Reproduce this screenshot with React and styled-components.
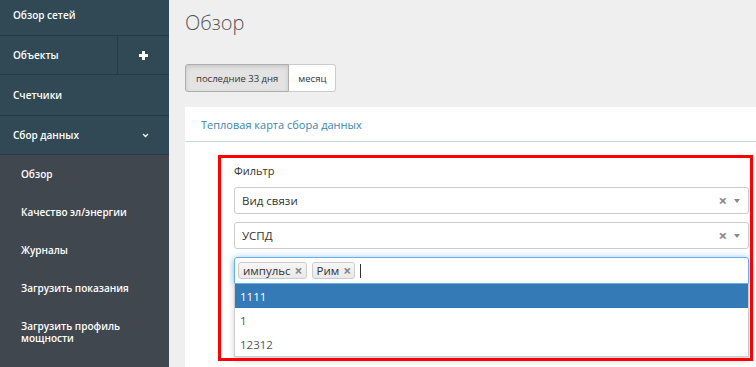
import React from "react";
import styled, { createGlobalStyle } from "styled-components";

const Global = createGlobalStyle`
  html, body { margin: 0; padding: 0; }
  body { font-family: "Open Sans", "Liberation Sans", sans-serif; background: #efefef; overflow: hidden; }
  * { box-sizing: border-box; }
`;

const Layout = styled.div`
  display: flex;
  width: 756px;
  height: 367px;
  overflow: hidden;
`;

const Sidebar = styled.nav`
  width: 169px;
  flex: none;
  display: flex;
  flex-direction: column;
  background: #41474e;
`;

const NavRow = styled.div`
  display: flex;
  align-items: stretch;
  height: ${(p) => p.$h || 40}px;
  background: #304954;
  border-bottom: 1px solid #243a44;
  color: #fff;
  font-size: 10px;
  font-weight: 600;
`;

const NavLabel = styled.div`
  flex: 1;
  display: flex;
  align-items: center;
  justify-content: space-between;
  padding: 0 20px 0 13px;
  padding-bottom: ${(p) => p.$pb || 0}px;
`;

const NavAction = styled.div`
  width: 52px;
  border-left: 1px solid #243a44;
  display: flex;
  align-items: center;
  justify-content: center;
`;

const SubMenu = styled.div`
  display: flex;
  flex-direction: column;
`;

const SubItem = styled.div`
  min-height: 38px;
  display: flex;
  align-items: center;
  padding: ${(p) => (p.$multi ? "12px 20px 0 21px" : "0 20px 0 21px")};
  color: #fff;
  font-size: 10px;
  font-weight: 600;
  line-height: 12.5px;
`;

const Main = styled.main`
  flex: 1;
  padding-left: 16px;
  display: flex;
  flex-direction: column;
  overflow: hidden;
`;

const Title = styled.h1`
  margin: 11px 0 0;
  font-size: 20px;
  font-weight: 300;
  line-height: 24px;
  color: #555;
`;

const BtnGroup = styled.div`
  display: flex;
  margin-top: 29px;
`;

const Btn = styled.button`
  height: 28px;
  padding: 0 ${(p) => (p.$first ? 10 : 9)}px;
  font-family: inherit;
  font-size: 9.5px;
  color: #333;
  border: 1px solid #ccc;
  background: ${(p) => (p.$active ? "#e3e3e3" : "#fff")};
  box-shadow: ${(p) => (p.$active ? "inset 0 2px 4px rgba(0,0,0,.12)" : "none")};
  border-radius: ${(p) => (p.$first ? "3px 0 0 3px" : "0 3px 3px 0")};
  border-left-width: ${(p) => (p.$first ? "1px" : "0")};
  border-color: ${(p) => (p.$active ? "#adadad" : "#ccc")};
`;

const Panel = styled.section`
  margin-top: 15px;
  width: 600px;
  flex: 1;
  background: #fff;
  display: flex;
  flex-direction: column;
`;

const PanelHead = styled.div`
  height: 35px;
  padding: 0 16px;
  display: flex;
  align-items: center;
  color: #3a87ad;
  font-size: 11px;
  border-bottom: 1px solid #c4d8df;
`;

const PanelBody = styled.div`
  position: relative;
  flex: 1;
  padding: 21px 0 0 49px;
`;

const Filter = styled.div`
  width: 515px;
  display: flex;
  flex-direction: column;
`;

const Label = styled.div`
  font-size: 11px;
  color: #333;
  line-height: 16px;
  margin-bottom: 8px;
`;

const Select = styled.div`
  height: 27px;
  border: 1px solid #ccc;
  border-radius: 3px;
  display: flex;
  align-items: center;
  padding: 0 8px 0 7px;
  font-size: 11.5px;
  color: #333;
  margin-bottom: 8px;
`;

const SelectText = styled.span`
  flex: 1;
`;

const Clear = styled.span`
  color: #888;
  font-size: 15px;
  font-weight: 700;
  margin-right: 7px;
  line-height: 1;
`;

const Caret = styled.span`
  width: 0;
  height: 0;
  border-left: 3px solid transparent;
  border-right: 3px solid transparent;
  border-top: 4px solid #888;
`;

const Multi = styled.div`
  display: flex;
  flex-direction: column;
  box-shadow: 0 4px 6px rgba(0, 0, 0, 0.18);
`;

const MultiInput = styled.div`
  height: 27px;
  border: 1px solid #66afe9;
  border-radius: 3px 3px 0 0;
  box-shadow: 0 0 6px rgba(102, 175, 233, 0.6);
  display: flex;
  align-items: center;
  gap: 5px;
  padding: 0 3px;
`;

const Tag = styled.span`
  display: inline-flex;
  align-items: center;
  gap: 4px;
  height: 17px;
  padding: 0 3px 0 4px;
  border: 1px solid #ccc;
  border-radius: 3px;
  background: linear-gradient(#f6f6f6, #e9e9e9);
  font-size: 11.5px;
  color: #333;
`;

const TagX = styled.span`
  color: #888;
  font-weight: 700;
  font-size: 14px;
  line-height: 1;
`;

const Cursor = styled.span`
  width: 1px;
  height: 14px;
  background: #333;
`;

const Dropdown = styled.div`
  border: 1px solid #ccc;
  border-top: none;
  background: #fff;
`;

const Option = styled.div`
  height: 24px;
  display: flex;
  align-items: center;
  padding-left: 5px;
  font-size: 11.5px;
  color: ${(p) => (p.$hl ? "#fff" : "#555")};
  background: ${(p) => (p.$hl ? "#337ab7" : "#fff")};
`;

const Highlight = styled.div`
  position: absolute;
  left: 33px;
  top: 13px;
  width: 535px;
  height: 206px;
  border: 3px solid #ff0000;
  pointer-events: none;
`;

const Plus = () => (
  <svg width="9" height="9" viewBox="0 0 9 9">
    <path d="M3 0h3v3h3v3H6v3H3V6H0V3h3z" fill="#fff" />
  </svg>
);

const Chevron = () => (
  <svg width="7" height="5" viewBox="0 0 7 5">
    <path d="M1 1l2.5 2.5L6 1" stroke="#fff" strokeWidth="1.3" fill="none" />
  </svg>
);

export default function App() {
  return (
    <>
      <Global />
      <Layout>
        <Sidebar>
          <NavRow $h={36}>
            <NavLabel $pb={5}>Обзор сетей</NavLabel>
          </NavRow>
          <NavRow $h={39}>
            <NavLabel>Объекты</NavLabel>
            <NavAction>
              <Plus />
            </NavAction>
          </NavRow>
          <NavRow $h={41}>
            <NavLabel>Счетчики</NavLabel>
          </NavRow>
          <NavRow $h={39}>
            <NavLabel>
              Сбор данных <Chevron />
            </NavLabel>
          </NavRow>
          <SubMenu>
            <SubItem>Обзор</SubItem>
            <SubItem>Качество эл/энергии</SubItem>
            <SubItem>Журналы</SubItem>
            <SubItem>Загрузить показания</SubItem>
            <SubItem $multi>
              Загрузить профиль
              <br />
              мощности
            </SubItem>
          </SubMenu>
        </Sidebar>
        <Main>
          <Title>Обзор</Title>
          <BtnGroup>
            <Btn $active $first>
              последние 33 дня
            </Btn>
            <Btn>месяц</Btn>
          </BtnGroup>
          <Panel>
            <PanelHead>Тепловая карта сбора данных</PanelHead>
            <PanelBody>
              <Filter>
                <Label>Фильтр</Label>
                <Select>
                  <SelectText>Вид связи</SelectText>
                  <Clear>×</Clear>
                  <Caret />
                </Select>
                <Select>
                  <SelectText>УСПД</SelectText>
                  <Clear>×</Clear>
                  <Caret />
                </Select>
                <Multi>
                  <MultiInput>
                    <Tag>
                      импульс <TagX>×</TagX>
                    </Tag>
                    <Tag>
                      Рим <TagX>×</TagX>
                    </Tag>
                    <Cursor />
                  </MultiInput>
                  <Dropdown>
                    <Option $hl>1111</Option>
                    <Option>1</Option>
                    <Option>12312</Option>
                  </Dropdown>
                </Multi>
              </Filter>
              <Highlight />
            </PanelBody>
          </Panel>
        </Main>
      </Layout>
    </>
  );
}
